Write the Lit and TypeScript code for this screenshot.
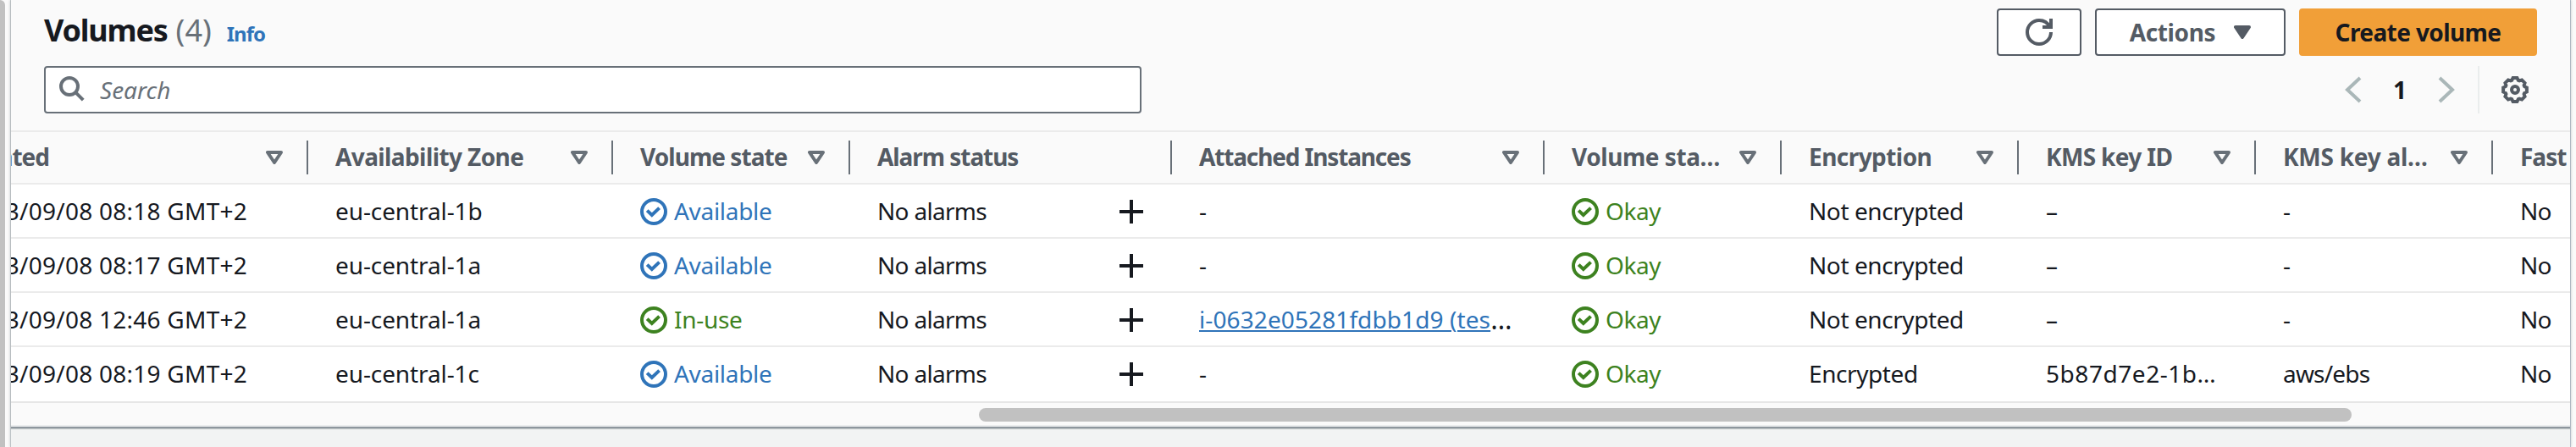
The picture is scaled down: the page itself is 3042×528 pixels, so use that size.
import { LitElement, html, svg, css, nothing, TemplateResult } from 'lit';
import { customElement, property } from 'lit/decorators.js';
import { styleMap } from 'lit/directives/style-map.js';

type Tone = 'info' | 'success';

/** Text run with its own tracking, in px. */
const run = (text: string, tracking = 0) =>
  html`<span style=${styleMap({ letterSpacing: `${tracking}px` })}>${text}</span>`;

interface Column {
  id: string;
  label: string;
  tracking: number;
  width: number;
  sortable: boolean;
}

const COLUMNS: Column[] = [
  { id: 'created', label: 'Created', tracking: -1, width: 352, sortable: true },
  { id: 'zone', label: 'Availability Zone', tracking: -0.6, width: 360, sortable: true },
  { id: 'state', label: 'Volume state', tracking: -0.95, width: 280, sortable: true },
  { id: 'alarm', label: 'Alarm status', tracking: -1.05, width: 380, sortable: false },
  { id: 'instances', label: 'Attached Instances', tracking: -1.15, width: 440, sortable: true },
  { id: 'status', label: 'Volume sta…', tracking: -0.45, width: 280, sortable: true },
  { id: 'encryption', label: 'Encryption', tracking: -0.55, width: 280, sortable: true },
  { id: 'key', label: 'KMS key ID', tracking: -0.65, width: 280, sortable: true },
  { id: 'alias', label: 'KMS key al…', tracking: -0.25, width: 280, sortable: true },
  { id: 'fast', label: 'Fast', tracking: -1, width: 92, sortable: false },
];

interface Volume {
  created: string;
  zone: string;
  state: string;
  tone: Tone;
  instance?: string;
  encryption: string;
  key: string;
  alias: string;
}

const VOLUMES: Volume[] = [
  { created: '2023/09/08 08:18 GMT+2', zone: 'eu-central-1b', state: 'Available', tone: 'info', encryption: 'Not encrypted', key: '–', alias: '-' },
  { created: '2023/09/08 08:17 GMT+2', zone: 'eu-central-1a', state: 'Available', tone: 'info', encryption: 'Not encrypted', key: '–', alias: '-' },
  { created: '2023/09/08 12:46 GMT+2', zone: 'eu-central-1a', state: 'In-use', tone: 'success', instance: 'i-0632e05281fdbb1d9 (tes', encryption: 'Not encrypted', key: '–', alias: '-' },
  { created: '2023/09/08 08:19 GMT+2', zone: 'eu-central-1c', state: 'Available', tone: 'info', encryption: 'Encrypted', key: '5b87d7e2-1b…', alias: 'aws/ebs' },
];

/** Outline of the eight-toothed settings wheel in a 16-unit box. */
const gearPath = (): string => {
  const points: string[] = [];
  const at = (radius: number, degrees: number) => {
    const a = (degrees * Math.PI) / 180;
    points.push(`${(8 + radius * Math.cos(a)).toFixed(2)} ${(8 + radius * Math.sin(a)).toFixed(2)}`);
  };
  for (let i = 0; i < 8; i++) {
    const mid = i * 45;
    at(5.9, mid - 19);
    at(7.05, mid - 10);
    at(7.05, mid + 10);
    at(5.9, mid + 19);
  }
  return `M${points.join('L')}Z`;
};

const ICONS: Record<string, TemplateResult> = {
  search: svg`<circle cx="6" cy="6" r="5"/><path d="m9.6 9.6 4.5 4.5"/>`,
  refresh: svg`<path d="M15 8c0 3.87-3.13 7-7 7s-7-3.13-7-7 3.13-7 7-7c2.79 0 5.2 1.63 6.33 4"/><path d="M10 5h5V0"/>`,
  check: svg`<circle cx="8" cy="8" r="7"/><path d="m4.1 7.3 2.8 2.7 4.4-4.2"/>`,
  plus: svg`<path d="M8 1v14M1 8h14"/>`,
  previous: svg`<path d="M11.5 1 4 8l7.5 7"/>`,
  next: svg`<path d="M4.5 1 12 8l-7.5 7"/>`,
  gear: svg`<path d=${gearPath()}/><circle cx="8" cy="8" r="2"/>`,
};

@customElement('ui-icon')
class UiIcon extends LitElement {
  @property() name = '';
  static styles = css`
    :host { display: block; flex: none; width: 32px; height: 32px; }
    svg { display: block; width: 100%; height: 100%; fill: none; stroke: currentColor; stroke-width: 2; overflow: visible; }
  `;
  render() {
    return html`<svg viewBox="0 0 16 16">${ICONS[this.name]}</svg>`;
  }
}

@customElement('ui-caret')
class UiCaret extends LitElement {
  @property({ type: Boolean }) filled = false;
  static styles = css`
    :host { display: block; flex: none; width: 20px; height: 16px; }
    svg { display: block; stroke: currentColor; stroke-width: 4; stroke-linejoin: round; fill: none; }
    .filled { fill: currentColor; }
  `;
  render() {
    return html`<svg width="20" height="16" viewBox="0 0 20 16">
      <path class=${this.filled ? 'filled' : ''} d="M2 2h16l-8 12z"/>
    </svg>`;
  }
}

@customElement('app-root')
class AppRoot extends LitElement {
  static styles = css`
    :host {
      display: flex; width: 3042px; height: 528px; overflow: hidden; background: #fafafa;
      font: 400 28px/40px "Noto Sans", "Open Sans", sans-serif; color: #16191f;
    }
    * { box-sizing: border-box; }
    .gutter { flex: none; width: 12px; }
    .gutter-thumb { width: 6px; height: 100%; background: #c1c1c1; border-top-right-radius: 6px; }
    .frame {
      width: 3024px; height: 528px; flex: none; background: #f2f3f3;
      border-left: 1px solid #bcc2c5; border-right: 1px solid #b6bec9;
      box-shadow: 0 0 3px rgba(0, 28, 36, .22);
    }
    .panel { height: 506px; background: #fafafa; border-bottom: 2px solid #8d969d; box-shadow: 0 1px 1px rgba(0, 28, 36, .2); }
    .heading { display: flex; justify-content: space-between; height: 66px; padding: 10px 39px 0 39px; }
    .title { display: flex; align-items: baseline; height: 56px; line-height: 52px; font-size: 36px; font-weight: 700; }
    .title .counter { margin-left: 10px; font-weight: 400; color: #687078; }
    .title .info { margin-left: 18px; font-size: 24px; color: #2f74b9; }
    .actions { display: flex; gap: 16px; }
    .button {
      display: flex; align-items: center; justify-content: center; height: 56px; padding-bottom: 1px;
      border: 2px solid #545b64; border-radius: 4px; background: #fff; color: #545b64; font-weight: 700; white-space: nowrap;
    }
    .refresh { width: 100px; padding: 0; }
    .menu { width: 225px; gap: 22px; }
    .primary { width: 281px; background: #f19f38; border-color: #f19f38; color: #16191f; }
    .tools { display: flex; justify-content: space-between; align-items: center; height: 56px; margin: 12px 39px 20px; }
    .search {
      display: flex; align-items: center; gap: 16px; width: 1296px; height: 56px; padding: 0 16px;
      border: 2px solid #687078; border-radius: 4px; background: #fff; color: #687078; font-style: italic;
    }
    .pager { display: flex; align-items: center; height: 56px; color: #aab7b8; }
    .page { width: 76px; text-align: center; font-weight: 700; color: #16191f; padding-bottom: 1px; }
    .rule { width: 2px; height: 56px; margin: 0 26px 0 22px; background: #eaeded; }
    .settings { color: #545b64; margin-right: 10px; }
    .row { display: flex; height: 64px; background: #fff; border-bottom: 2px solid #ebebeb; }
    .row.head { background: #fafafa; border-top: 2px solid #ebebeb; color: #545b64; font-weight: 700; }
    .row.last { height: 66px; padding-bottom: 2px; border-color: #e6e6e6; }
    .cell { display: flex; align-items: center; flex: none; padding-left: 32px; white-space: nowrap; overflow: hidden; }
    .head .cell { justify-content: space-between; padding-bottom: 2px; }
    .tail { display: flex; align-items: center; gap: 28px; color: #687078; }
    .tail ui-caret { margin-top: 2px; }
    .divider { width: 2px; height: 40px; background: #687078; margin-top: 2px; }
    .clip { display: flex; justify-content: flex-end; width: 279px; overflow: hidden; }
    .head .clip { width: 45px; }
    .cell.first { padding-left: 0; }
    .status { display: flex; align-items: center; gap: 8px; }
    .status ui-icon, .alarm ui-icon { margin-top: 2px; }
    .success { color: #3d8220; }
    .info { color: #2f74b9; }
    .alarm { justify-content: space-between; padding-right: 32px; }
    .link { color: #2f74b9; text-decoration: underline 2px; text-underline-offset: 2px; }
    .more { font-size: 32px; }
    .scroll { display: flex; height: 28px; padding: 6px 0 0 1143px; border-bottom: 2px solid #ebedee; }
    .thumb { width: 1621px; height: 16px; border-radius: 8px; background: #c1c1c1; }
  `;

  private head(c: Column, i: number) {
    const first = i === 0;
    const last = i === COLUMNS.length - 1;
    return html`<div class="cell ${first ? 'first' : ''}" style=${styleMap({ width: `${c.width - (first ? 1 : 0)}px` })}>
      ${first ? html`<span class="clip">${run(c.label, c.tracking)}</span>` : run(c.label, c.tracking)}
      ${last ? nothing : html`<span class="tail">
        ${c.sortable ? html`<ui-caret></ui-caret>` : nothing}<span class="divider"></span>
      </span>`}
    </div>`;
  }

  private status(tone: Tone, label: string, tracking: number) {
    return html`<span class="status ${tone}"><ui-icon name="check"></ui-icon>${run(label, tracking)}</span>`;
  }

  private row(v: Volume, i: number) {
    const cells = [
      html`<span class="clip">${run(v.created, 0.25)}</span>`,
      run(v.zone, -0.1),
      this.status(v.tone, v.state, -0.3),
      html`${run('No alarms', -0.7)}<ui-icon name="plus"></ui-icon>`,
      v.instance
        ? html`<span class="link">${run(v.instance, 0.1)}</span><span class="more">…</span>`
        : run('-'),
      this.status('success', 'Okay', -0.4),
      run(v.encryption, -0.42),
      run(v.key, v.key.length > 1 ? 0.55 : 0),
      run(v.alias, v.alias.length > 1 ? -0.8 : 0),
      run('No', -0.8),
    ];
    return html`<div class="row ${i === VOLUMES.length - 1 ? 'last' : ''}">
      ${cells.map((content, n) => html`<div
        class="cell ${n === 0 ? 'first' : ''} ${COLUMNS[n].id === 'alarm' ? 'alarm' : ''}"
        style=${styleMap({ width: `${COLUMNS[n].width - (n === 0 ? 1 : 0)}px` })}>${content}</div>`)}
    </div>`;
  }

  render() {
    return html`
      <div class="gutter"><div class="gutter-thumb"></div></div>
      <div class="frame">
        <div class="panel">
          <div class="heading">
            <div class="title">
              ${run('Volumes', -1.2)}<span class="counter">(4)</span><span class="info">${run('Info', -1)}</span>
            </div>
            <div class="actions">
              <div class="button refresh"><ui-icon name="refresh"></ui-icon></div>
              <div class="button menu">${run('Actions', -0.4)}<ui-caret filled></ui-caret></div>
              <div class="button primary">${run('Create volume', -0.6)}</div>
            </div>
          </div>
          <div class="tools">
            <div class="search"><ui-icon name="search"></ui-icon>${run('Search', 0)}</div>
            <div class="pager">
              <ui-icon name="previous"></ui-icon><span class="page">1</span><ui-icon name="next"></ui-icon>
              <span class="rule"></span>
              <ui-icon class="settings" name="gear"></ui-icon>
            </div>
          </div>
          <div class="row head">${COLUMNS.map((c, i) => this.head(c, i))}</div>
          ${VOLUMES.map((v, i) => this.row(v, i))}
          <div class="scroll"><div class="thumb"></div></div>
        </div>
      </div>`;
  }
}
